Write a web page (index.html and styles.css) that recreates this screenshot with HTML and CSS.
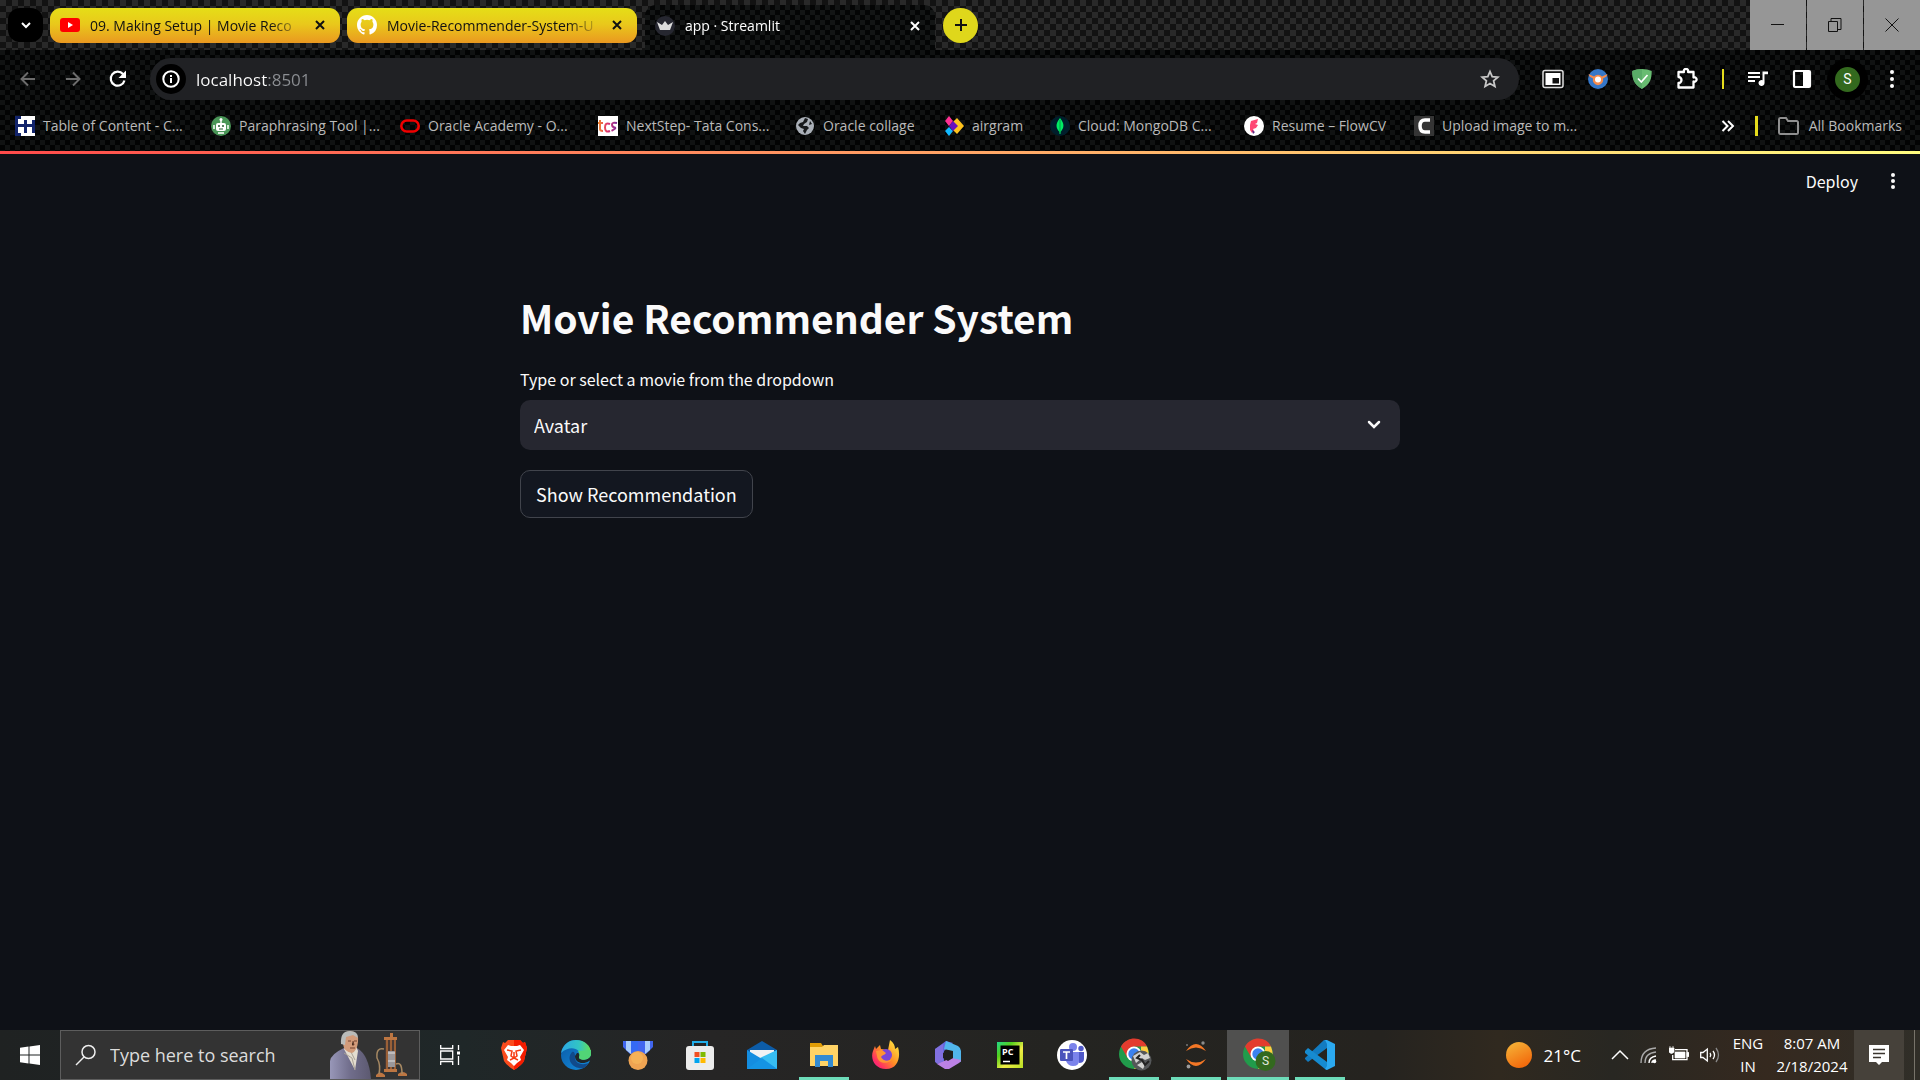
FILE: index.html
```html
<!DOCTYPE html>
<html lang="en">
<head>
<meta charset="utf-8">
<title>app · Streamlit</title>
<link rel="stylesheet" href="styles.css">
</head>
<body>
<header class="browser">
  <div class="tabstrip">
    <button class="tab-search" aria-label="Search tabs"><svg width="14" height="14" viewBox="0 0 14 14"><path d="M3 5l4 4 4-4" fill="none" stroke="#fff" stroke-width="2"/></svg></button>
    <div class="tab">
      <svg width="20" height="20" viewBox="0 0 20 20"><rect y="3" width="20" height="14" rx="3" fill="#f00"/><path d="M8 7l5 3-5 3z" fill="#fff"/></svg>
      <button class="tab-title">09. Making Setup | Movie Reco</button>
      <button class="tab-close" aria-label="Close tab"><svg width="12" height="12" viewBox="0 0 12 12"><path d="M2 2l8 8M10 2l-8 8" stroke="currentColor" stroke-width="2"/></svg></button>
    </div>
    <div class="tab">
      <svg width="20" height="20" viewBox="0 0 16 16"><path fill="#fff" d="M8 0C3.58 0 0 3.58 0 8c0 3.54 2.29 6.53 5.47 7.59.4.07.55-.17.55-.38 0-.19-.01-.82-.01-1.49-2.01.37-2.53-.49-2.69-.94-.09-.23-.48-.94-.82-1.13-.28-.15-.68-.52-.01-.53.63-.01 1.08.58 1.23.82.72 1.21 1.87.87 2.33.66.07-.52.28-.87.51-1.07-1.78-.2-3.64-.89-3.64-3.95 0-.87.31-1.59.82-2.15-.08-.2-.36-1.02.08-2.12 0 0 .67-.21 2.2.82a7.6 7.6 0 014 0c1.53-1.04 2.2-.82 2.2-.82.44 1.1.16 1.92.08 2.12.51.56.82 1.27.82 2.15 0 3.07-1.87 3.75-3.65 3.95.29.25.54.73.54 1.48 0 1.07-.01 1.93-.01 2.2 0 .21.15.46.55.38A8.01 8.01 0 0016 8c0-4.42-3.58-8-8-8z"/></svg>
      <button class="tab-title">Movie-Recommender-System-U</button>
      <button class="tab-close" aria-label="Close tab"><svg width="12" height="12" viewBox="0 0 12 12"><path d="M2 2l8 8M10 2l-8 8" stroke="currentColor" stroke-width="2"/></svg></button>
    </div>
    <div class="tab tab-active">
      <svg width="20" height="20" viewBox="0 0 20 20"><circle cx="10" cy="10" r="10" fill="#262730"/><path d="M2 6l5 3 3-4 3 4 5-3-3 8H5z" fill="#ddd"/></svg>
      <button class="tab-title">app · Streamlit</button>
      <button class="tab-close" aria-label="Close tab"><svg width="12" height="12" viewBox="0 0 12 12"><path d="M2 2l8 8M10 2l-8 8" stroke="currentColor" stroke-width="2"/></svg></button>
    </div>
    <button class="new-tab" aria-label="New tab"><svg width="14" height="14" viewBox="0 0 14 14"><path d="M7 1v12M1 7h12" stroke="#111" stroke-width="2"/></svg></button>
    <div class="window-controls">
      <button aria-label="Minimize"><svg width="14" height="14" viewBox="0 0 14 14"><path d="M0 6.500h13" stroke="#111"/></svg></button>
      <button aria-label="Restore"><svg width="14" height="14" viewBox="0 0 14 14"><path d="M.5 3.500h9v10h-9zM3 3.500v-3h10v11h-3" fill="none" stroke="#111"/></svg></button>
      <button aria-label="Close"><svg width="14" height="14" viewBox="0 0 14 14"><path d="M.5.5l13 13M13.500.5l-13 13" stroke="#111"/></svg></button>
    </div>
  </div>

  <div class="toolbar">
    <div class="nav-buttons">
      <button aria-label="Back"><svg width="20" height="20" viewBox="0 0 20 20"><path d="M17 10H4M10 3.500L3.500 10l6.500 6.500" fill="none" stroke="#6c6c6c" stroke-width="2"/></svg></button>
      <button aria-label="Forward"><svg width="20" height="20" viewBox="0 0 20 20"><path d="M3 10h13M10 3.500l6.500 6.500-6.500 6.500" fill="none" stroke="#6c6c6c" stroke-width="2"/></svg></button>
      <button aria-label="Reload"><svg width="20" height="20" viewBox="0 0 20 20"><path d="M16.500 11.500A7 7 0 1 1 15 5l1.500 1.500" fill="none" stroke="#fff" stroke-width="2.200"/><path d="M18 1.500V9h-7.500z" fill="#fff"/></svg></button>
    </div>
    <div class="omnibox">
      <button class="site-info" aria-label="Site information"><svg width="18" height="18" viewBox="0 0 18 18"><circle cx="9" cy="9" r="7.700" fill="none" stroke="#fff" stroke-width="2"/><path d="M9 8v5M9 5v2" stroke="#fff" stroke-width="2"/></svg></button>
      <input class="address" type="text" value="localhost:8501" aria-label="Address">
      <button aria-label="Bookmark this tab"><svg width="20" height="20" viewBox="0 0 20 20"><path d="M10 2.500l2.200 5.200 5.600.5-4.200 3.700 1.300 5.500L10 14.500l-4.900 2.900 1.300-5.500-4.200-3.700 5.600-.5z" fill="none" stroke="#c8c8c8" stroke-width="1.800"/></svg></button>
    </div>
    <div class="extensions">
      <button aria-label="Picture in picture"><svg width="22" height="20" viewBox="0 0 22 20"><rect x="1" y="1.500" width="20" height="17" rx="2" fill="#111" stroke="#ddd" stroke-width="1.500"/><rect x="3.500" y="4" width="15" height="12" fill="#fff"/><rect x="10.500" y="9" width="6.500" height="5.500" fill="#111"/></svg></button>
      <button aria-label="Extension"><svg width="20" height="20" viewBox="0 0 20 20"><circle cx="10" cy="10" r="10" fill="#3577c8"/><path d="M.5 5L6 7.500a5.500 5.500 0 0 1 8 0L19.500 5l-1 2.500-3.500 2a5.200 5.200 0 1 1-10 0l-3.500-2z" fill="#f58a4b"/><circle cx="10" cy="10.500" r="3" fill="#fff"/></svg></button>
      <button aria-label="Ad blocker"><svg width="20" height="20" viewBox="0 0 20 20"><path d="M10 0c3.500 0 7 .7 9.700 2 0 7-1 13-9.700 18C1.300 15 .3 9 .3 2 3 .7 6.500 0 10 0z" fill="#68bc71"/><path d="M10 0v20C1.300 15 .3 9 .3 2 3 .7 6.500 0 10 0z" fill="#5aac68"/><path d="M6 9.500l3.300 3.500L15.500 6" fill="none" stroke="#fff" stroke-width="1.700"/></svg></button>
      <button aria-label="Extensions"><svg width="22" height="22" viewBox="0 0 22 22"><path d="M2.500 4H8a2.200 2.200 0 1 1 4 0h5.500v5.500a2.200 2.200 0 1 1 0 4V19.500h-15V15a3 3 0 0 0 0-6z" fill="none" stroke="#fff" stroke-width="2.300" stroke-linejoin="round"/></svg></button>
      <span class="bar"></span>
      <button aria-label="Media"><svg width="20" height="20" viewBox="0 0 20 20"><path d="M0 4h12M0 8h12M0 12h7" stroke="#fff" stroke-width="2"/><path d="M20 2.500v2.800h-3.500V14a3 3 0 1 1-2-2.800V2.500z" fill="#fff"/></svg></button>
      <button aria-label="Side panel"><svg width="20" height="20" viewBox="0 0 20 20"><rect x="2" y="2" width="16" height="16" rx="1" fill="none" stroke="#fff" stroke-width="2.200"/><path d="M11 2h7v16h-7z" fill="#fff"/></svg></button>
      <button class="profile" aria-label="Profile"><span>S</span></button>
      <button aria-label="Menu"><svg width="6" height="20" viewBox="0 0 6 20"><g fill="#fff"><circle cx="3" cy="3" r="2"/><circle cx="3" cy="10" r="2"/><circle cx="3" cy="17" r="2"/></g></svg></button>
    </div>
  </div>

  <nav class="bookmarks" aria-label="Bookmarks">
    <div class="bookmark-list">
      <a href="#"><svg width="20" height="20" viewBox="0 0 20 20"><rect width="20" height="20" fill="#fff"/><path d="M0 0h6v3H3v5h6V4h3v4h5V4h3v13h-3v-6h-5v6H9v-6H3v6h3v3H0z" fill="#12246b"/></svg><span>Table of Content - C...</span></a>
      <a href="#"><svg width="20" height="20" viewBox="0 0 20 20"><circle cx="10" cy="10" r="10" fill="#499557"/><rect x="5" y="7" width="10" height="8" rx="2" fill="#fff"/><path d="M10 3v4M3 9v4M17 9v4M7 17h6" stroke="#fff" stroke-width="1.500"/><circle cx="10" cy="3.500" r="1.500" fill="#fff"/><circle cx="8" cy="10" r="1" fill="#245b31"/><circle cx="12" cy="10" r="1" fill="#245b31"/><path d="M8 13h4" stroke="#245b31"/></svg><span>Paraphrasing Tool |...</span></a>
      <a href="#"><svg width="20" height="20" viewBox="0 0 20 20"><rect x="1.300" y="4.500" width="17.400" height="11" rx="5.500" fill="none" stroke="#f00000" stroke-width="2.600"/></svg><span>Oracle Academy - O...</span></a>
      <a href="#"><svg width="20" height="20" viewBox="0 0 20 20"><defs><linearGradient id="tcs"><stop stop-color="#f28b2d"/><stop offset=".5" stop-color="#e0336d"/><stop offset="1" stop-color="#7b2d9c"/></linearGradient></defs><rect width="20" height="20" fill="#fff"/><g fill="none" stroke="url(#tcs)" stroke-width="2"><path d="M2 4v9q0 2 3 2M0 7h5M12 8q-5-2-5 3.500t5 3.500M19 7q-5-1-5 1.500t2.500 3-3 3.300"/></g></svg><span>NextStep- Tata Cons...</span></a>
      <a href="#"><svg width="20" height="20" viewBox="0 0 20 20"><circle cx="10" cy="10" r="9" fill="#aab0b8"/><path d="M10 2l3 1-1 3-3 2-1 2h4l2 2-2 2-2 4-2-3 1-2-3-1-3-3 2-2 3-1z" fill="#171a1c"/><path d="M15 5l2 3-3 1z" fill="#171a1c"/></svg><span>Oracle collage</span></a>
      <a href="#"><svg width="20" height="20" viewBox="0 0 20 20"><path d="M13 2l7 8-7 8-4-4 4-4-4-4z" fill="#ffc21c"/><path d="M5 0l4 5-4 5-4-5z" fill="#ff2f92"/><path d="M5 11l4 4-4 5-4-5z" fill="#12b9ff"/><path d="M9 5l5 5-5 5-4-5z" fill="#6910bd"/></svg><span>airgram</span></a>
      <a href="#"><svg width="20" height="20" viewBox="0 0 20 20"><circle cx="10" cy="10" r="10" fill="#001e2b"/><path d="M10 2c5 6 4 10 .5 14v2h-1v-2C6 12 5 8 10 2z" fill="#00ed64"/><path d="M10 4v13" stroke="#05a049"/></svg><span>Cloud: MongoDB C...</span></a>
      <a href="#"><svg width="20" height="20" viewBox="0 0 20 20"><circle cx="10" cy="10" r="10" fill="#fff"/><path d="M7 5l7-2-1 4-2 1 3 1-2 3-3 1 1 2-2 2-2-3V9z" fill="#ff4773"/><path d="M8 14l3 2-2 2z" fill="#5b2a86"/></svg><span>Resume – FlowCV</span></a>
      <a href="#"><svg width="20" height="20" viewBox="0 0 20 20"><rect width="20" height="20" fill="#353535"/><path d="M16 4h-5q-5 0-5 6t5 6h5" fill="none" stroke="#fff" stroke-width="3.500"/></svg><span>Upload image to m...</span></a>
    </div>
    <div class="bookmark-end">
      <button aria-label="More bookmarks"><svg width="14" height="14" viewBox="0 0 14 14"><path d="M1.500 2l5 5-5 5M7 2l5 5-5 5" fill="none" stroke="#fff" stroke-width="2"/></svg></button>
      <span class="bar bar-bold"></span>
      <a href="#"><svg width="21" height="18" viewBox="0 0 21 18"><path d="M1 2.500Q1 1 2.500 1H8l2 3h8.500Q20 4 20 5.500v10q0 1.500-1.500 1.500h-16Q1 17 1 15.500z" fill="none" stroke="#8f8f8f" stroke-width="2"/></svg><span>All Bookmarks</span></a>
    </div>
  </nav>
</header>

<main class="app">
  <div class="app-header">
    <button>Deploy</button>
    <button aria-label="Main menu"><svg width="6" height="20" viewBox="0 0 6 20"><g fill="#fafafa"><circle cx="3" cy="4" r="2"/><circle cx="3" cy="10" r="2"/><circle cx="3" cy="16" r="2"/></g></svg></button>
  </div>
  <section class="content">
    <h1>Movie Recommender System</h1>
    <label for="movie">Type or select a movie from the dropdown</label>
    <div class="select-box">
      <select id="movie"><option>Avatar</option></select>
      <svg width="14" height="10" viewBox="0 0 14 10"><path d="M2 2l5 5 5-5" fill="none" stroke="#fafafa" stroke-width="2.500" stroke-linecap="round"/></svg>
    </div>
    <button class="recommend">Show Recommendation</button>
  </section>
</main>

<footer class="taskbar">
  <button class="start" aria-label="Start"><svg width="20" height="20" viewBox="0 0 20 20"><path d="M0 2.800l8.500-1.200v8H0zM9.500 1.400L20 0v9.500H9.500zM0 10.500h8.500v8L0 17.300zM9.500 10.500H20V20L9.500 18.600z" fill="#fff"/></svg></button>
  <div class="search">
    <svg width="22" height="22" viewBox="0 0 22 22"><circle cx="13.500" cy="8" r="6.500" fill="none" stroke="#eee" stroke-width="1.500"/><path d="M9 13L1 21" stroke="#eee" stroke-width="1.500"/></svg>
    <input type="text" placeholder="Type here to search" aria-label="Type here to search">
    <svg class="highlight" width="80" height="48" viewBox="0 0 80 48"><defs><linearGradient id="coat"><stop stop-color="#9897b8"/><stop offset=".5" stop-color="#706d8b"/><stop offset="1" stop-color="#5c5970"/></linearGradient></defs><path d="M0 48V30q1-7 14-13h13q12 7 14 31z" fill="url(#coat)"/><path d="M14 18l3-3h9l2 5-3 19z" fill="#e4ddd0"/><path d="M14 22l8 5 3 12M20 19l5 10" stroke="#aaa195" fill="none"/><path d="M12 10q-1-9 8-10 9 1 8 11-1 9-6 11-8-1-9-9z" fill="#d29b7a"/><path d="M11 13q-1-13 9-13 8 0 8 7l-5-3-7 2-1 8z" fill="#b9bbb9"/><path d="M18 10h3M24 10h3M23 10l1 4h-2M20 17h5" stroke="#74432f"/><path d="M55 7h11v32H55z" fill="#4a3a34"/><path d="M57 7v32M61 7v32M65 7v32" stroke="#b56d38" stroke-width="1.500"/><path d="M58 20h7v16h-7z" fill="#9b989b"/><path d="M58 22h7M58 30h7" stroke="#e0dedd"/><path d="M54 6h13v3H54zM54 38h13v3H54zM60 2h3v5h-3zM46 44q4-5 9 0v2h-9zM68 43q5-4 9 0v2h-9z" fill="#bd7642"/><path d="M54 18q-8-2-7 9 4 7 2 16M66 33q6-3 6 10" fill="none" stroke="#a78963" stroke-width="1.500"/></svg>
  </div>
  <button class="task-view" aria-label="Task view"><svg width="20" height="20" viewBox="0 0 20 20"><path d="M.7 0v3.500h12V0M.7 20v-3.500h12V20M.7 6h12v8H.7zM18.500 0v5M18.500 11v9" fill="none" stroke="#fff" stroke-width="1.300"/><rect x="17" y="6.500" width="3" height="3" fill="#fff"/></svg></button>
  <div class="apps">
    <button aria-label="Brave"><svg width="30" height="30" viewBox="0 0 30 30"><path d="M9 0h12l3 3 2-1 2 6-3 13q-2 4-10 9Q7 25 5 21L2 8l2-6 2 1z" fill="#fb4b1d"/><path d="M15 0h6l3 3 2-1 2 6-3 13q-2 4-10 9z" fill="#f41c00"/><path d="M9 5l3 1h6l3-1 4 5-4 7 1 3-4 3-3 3-3-3-4-3 1-3-4-7z" fill="#fff"/><path d="M8 10l5 1-1 5 3 2 3-2-1-5 5-1M11 20l4-2 4 2M15 18v-6" fill="none" stroke="#f63b13" stroke-width="1.500"/></svg></button>
    <button aria-label="Edge"><svg width="30" height="30" viewBox="0 0 30 30"><defs><linearGradient id="edge1"><stop stop-color="#2ba6e6"/><stop offset=".6" stop-color="#32c5c3"/><stop offset="1" stop-color="#66e052"/></linearGradient><linearGradient id="edge2" y1="0" y2="1"><stop stop-color="#0c59a4"/><stop offset="1" stop-color="#128ee0"/></linearGradient></defs><circle cx="15" cy="15" r="15" fill="url(#edge2)"/><path d="M0 13C2 4 8 0 15 0c9 0 15 6 15 13 0 5-4 7-8 7-5 0-5-2-4-3 4-8-9-13-18-4z" fill="url(#edge1)"/><path d="M11 12c-7 8 2 18 12 16l5-5c-8 3-15 0-14-7 0-3-1-5-3-4z" fill="#114a8b"/><path d="M14 16c0 7 8 9 14 5l2-1V15c-2 5-8 6-12 3 2-3 0-5-2-5z" fill="#20272a"/><path d="M18 17c1-3 0-4-1-6l13-1v4c0 7-13 7-12 3z" fill="#51d576"/></svg></button>
    <button aria-label="Rewards"><svg width="30" height="30" viewBox="0 0 30 30"><path d="M0 1h30v6l-7 7H7L0 7z" fill="#4166ef"/><path d="M3 1h5v13L3 10zM22 1h5v9l-5 4z" fill="#aacdfc"/><path d="M8 1h7v13H8z" fill="#356af4"/><circle cx="15" cy="20.500" r="9.500" fill="#efa452"/><circle cx="14" cy="18" r="6" fill="#f9bd5d" opacity=".6"/></svg></button>
    <button aria-label="Microsoft Store"><svg width="30" height="30" viewBox="0 0 30 30"><path d="M8 8V2h14v6" fill="none" stroke="#22aeea" stroke-width="2"/><rect x="1" y="6" width="28" height="24" rx="3" fill="#ececec"/><path d="M9.500 12h5v5h-5z" fill="#f25022"/><path d="M15.500 12h5v5h-5z" fill="#7fba00"/><path d="M9.500 18h5v5h-5z" fill="#00a4ef"/><path d="M15.500 18h5v5h-5z" fill="#ffb900"/></svg></button>
    <button aria-label="Mail"><svg width="30" height="30" viewBox="0 0 30 30"><path d="M0 10L15 1l15 9v10H0z" fill="#0c5ca8"/><path d="M3 10h24v8H3z" fill="#f1f2f4"/><path d="M0 10l15 9 15-9v19H0z" fill="#148de0"/><path d="M30 10v19L13 18z" fill="#37bdf2"/><path d="M0 29l15-11 15 11z" fill="#1594e4"/></svg></button>
    <button class="open" aria-label="File Explorer"><svg width="30" height="30" viewBox="0 0 30 30"><path d="M1 3h11l2 3h13v5H1z" fill="#e09c05"/><path d="M1 7h12l2-2h14v21H1z" fill="#ffd365"/><path d="M6 15h18v12h-5v-6h-8v6H6z" fill="#338bd2"/></svg></button>
    <button aria-label="Firefox"><svg width="30" height="30" viewBox="0 0 30 30"><defs><linearGradient id="ff" x1="1" x2="0" y1="0" y2="1"><stop offset=".1" stop-color="#ffe23e"/><stop offset=".5" stop-color="#ff8b25"/><stop offset=".8" stop-color="#ff2d65"/><stop offset="1" stop-color="#e320a0"/></linearGradient></defs><path d="M4 6l1 3 4-4 1 4 7 1 2-10c4 3 5 6 5 9l3-2c3 10 0 22-12 22C4 29-1 19 2 11z" fill="url(#ff)"/><circle cx="15" cy="15" r="6" fill="#7a45d9"/><path d="M5 11l6-1 4 3c-1 2-4 2-5 4 2 4 7 5 11 2-2 5-14 6-15-3z" fill="#ff9535"/></svg></button>
    <button aria-label="Microsoft 365"><svg width="30" height="30" viewBox="0 0 30 30"><path d="M2 9L13 1l7 2-9 8v11l-6 2-3-2z" fill="#656ade"/><path d="M13 1l12 5q3 2 3 5v11l-8-3V11l-9-2z" fill="#51b6ec"/><path d="M28 20q0 2-2 3l-10 6h-4L4 24l7-3 8-3z" fill="#bc81e5"/><path d="M2 9l8-5v17l-6 3-2-3z" fill="#9474df" opacity=".6"/><path d="M15 10l5 3v5l-5 3-5-3v-5z" fill="#20211f"/></svg></button>
    <button aria-label="PyCharm"><svg width="30" height="30" viewBox="0 0 30 30"><defs><linearGradient id="pc" x2="1" y2="1"><stop stop-color="#21d789"/><stop offset=".3" stop-color="#54d01b"/><stop offset=".6" stop-color="#f1ed45"/><stop offset="1" stop-color="#b7df24"/></linearGradient></defs><path d="M2 2h26v26H2z" fill="url(#pc)"/><path d="M5.500 5.500h19v19h-19z"/><text x="7" y="15" font-family="Open Sans" font-size="9" font-weight="700" fill="#fff">PC</text><path d="M8 21.500h7" stroke="#fff" stroke-width="1.500"/></svg></button>
    <button aria-label="Teams"><svg width="30" height="30" viewBox="0 0 30 30"><circle cx="15" cy="15" r="15" fill="#fff"/><circle cx="16" cy="7" r="4" fill="#7b83eb"/><circle cx="24" cy="8.500" r="2.700" fill="#5059c9"/><path d="M18 12h9v7q0 4-5 4z" fill="#5059c9"/><path d="M9 12h13v9q0 5-6 5-5 0-7-5z" fill="#7b83eb"/><rect x="3" y="9" width="13" height="12" rx="1" fill="#4b53bc"/><path d="M6 12h7M9.500 12v7" stroke="#fff" stroke-width="1.700"/></svg></button>
    <button class="open badged" aria-label="Chrome"><svg width="34" height="34" viewBox="0 0 34 34"><circle cx="15" cy="16" r="15" fill="#219b4b"/><path d="M2 8.500C9-3 24-1 28 8.500H15L8.500 20z" fill="#e33b2e"/><path d="M28 8.500q5 13-5 20L15 31l7-11V8.500z" fill="#ffcd40"/><circle cx="15" cy="16" r="7.500" fill="#fff"/><circle cx="15" cy="16" r="5.700" fill="#3d82ee"/><circle cx="22.500" cy="22.500" r="10" fill="#555759"/><path d="M14 18l7-4 4 3 4-2 2 5-5 2-3-2-6 5zM18 27l5-3 3 3-2 4z" fill="#d2d2d0"/><path d="M21 17l-3 3 5 2 3 5 4-4" stroke="#222" fill="none" stroke-width="2"/></svg></button>
    <button class="open" aria-label="Jupyter"><svg width="30" height="30" viewBox="0 0 30 30"><path d="M5 11q10-14 20 0-10-7-20 0zM5 19q10 14 20 0-10 7-20 0z" fill="#f37726"/><circle cx="22" cy="3" r="1.700" fill="#8b8c8b"/><circle cx="6" cy="5" r="1" fill="#777"/><circle cx="7.500" cy="26.500" r="1.900" fill="#9c9c9c"/></svg></button>
    <button class="open badged current" aria-label="Chrome, S profile"><svg width="34" height="34" viewBox="0 0 34 34"><circle cx="15" cy="16" r="15" fill="#219b4b"/><path d="M2 8.500C9-3 24-1 28 8.500H15L8.500 20z" fill="#e33b2e"/><path d="M28 8.500q5 13-5 20L15 31l7-11V8.500z" fill="#ffcd40"/><circle cx="15" cy="16" r="7.500" fill="#fff"/><circle cx="15" cy="16" r="5.700" fill="#3d82ee"/><circle cx="22.500" cy="23" r="10" fill="#33691e"/><text x="22.500" y="27" text-anchor="middle" font-family="Roboto" font-size="12" fill="#e0e8dc">S</text></svg></button>
    <button class="open" aria-label="Visual Studio Code"><svg width="30" height="30" viewBox="0 0 30 30"><path d="M22 0v8L3 22 0 19v-1L19 0z" fill="#127bc0"/><path d="M0 11l3-3 19 14v8l-2-1L0 13z" fill="#168bd0"/><path d="M20 0h2l8 4v22l-8 4-2-1 2-3V4z" fill="#2ba9f0"/></svg></button>
  </div>
  <div class="tray">
    <button class="weather"><svg width="26" height="26" viewBox="0 0 26 26"><defs><linearGradient id="sun" x2=".5" y2="1"><stop stop-color="#f6b93b"/><stop offset="1" stop-color="#f26b0d"/></linearGradient></defs><circle cx="13" cy="13" r="13" fill="url(#sun)"/></svg><span>21°C</span></button>
    <div class="status">
      <button aria-label="Show hidden icons"><svg width="18" height="18" viewBox="0 0 18 18"><path d="M1 13l8-8 8 8" fill="none" stroke="#fff" stroke-width="1.500"/></svg></button>
      <button aria-label="Network"><svg width="18" height="18" viewBox="0 0 18 18"><g fill="none" stroke="#aaa" stroke-width="1.400"><path d="M1 17Q1 3 16 2M5 17Q5 7 16 6"/><path d="M9 17q0-6 7-7M12 17q0-3 4-3" stroke="#fff"/></g><circle cx="14.500" cy="15.500" r="1.800" fill="#fff"/></svg></button>
      <button aria-label="Battery"><svg width="20" height="18" viewBox="0 0 20 18"><path d="M6 3.700h12v10H3.700V9" fill="none" stroke="#fff" stroke-width="1.300"/><path d="M6 6h10v6H6zM18 6.500h2v4h-2zM0 2h5v4q-2.500 3-5 0zM1 0v3M4 0v3" fill="#fff" stroke="#fff" stroke-width=".7"/></svg></button>
      <button aria-label="Volume"><svg width="20" height="18" viewBox="0 0 20 18"><path d="M.7 6.500H3L7.300 3v12L3 11.500H.7z" fill="none" stroke="#fff" stroke-width="1.300"/><path d="M10 7q1.500 2 0 4M13 5q3 4 0 8" fill="none" stroke="#fff" stroke-width="1.300"/><path d="M16 2q5 7 0 14" fill="none" stroke="#888" stroke-width="1.300"/></svg></button>
    </div>
    <button class="language">ENG<br>IN</button>
    <button class="clock">8:07 AM<br>2/18/2024</button>
    <button class="notifications" aria-label="Notifications"><svg width="20" height="20" viewBox="0 0 20 20"><path d="M0 0h20v17h-7l-3 3-3-3H0z" fill="#fff"/><path d="M4 4.500h12M4 8.500h12M4 12.500h8" stroke="#3b362f" stroke-width="1.300"/></svg></button>
    <span class="desktop-edge"></span>
  </div>
</footer>
</body>
</html>
```
FILE: styles.css
```css
* { box-sizing: border-box; }
body {
  margin: 0;
  min-height: 100vh;
  display: flex;
  flex-direction: column;
  background: #0e1117;
  color: #fafafa;
  font-family: "Open Sans", "Liberation Sans", sans-serif;
}
button {
  display: flex;
  align-items: center;
  justify-content: center;
  padding: 0;
  border: 0;
  background: none;
  color: inherit;
  font: inherit;
}
a { color: inherit; text-decoration: none; }
svg { display: block; flex: none; }
input, select { min-width: 0; border: 0; padding: 0; background: none; color: inherit; font: inherit; outline: 0; }

/* Browser window */
.browser { background: repeating-conic-gradient(#020303 0 25%, #101212 0 50%) 0 0 / 10px 10px; }
.tabstrip {
  display: flex;
  align-items: center;
  height: 50px;
  padding-left: 8px;
  font-size: 14px;
  background: repeating-conic-gradient(#121212 0 25%, #292929 0 50%) 0 0 / 12px 12px;
}
.tab-search { width: 35px; height: 34px; margin-right: 7px; border-radius: 12px; background: #000; }
.tab {
  display: flex;
  align-items: center;
  gap: 10px;
  width: 290px;
  height: 35px;
  margin-right: 7px;
  padding: 0 14px 0 10px;
  border-radius: 11px;
  background: linear-gradient(#e5de17, #e9c91b 45%, #ea9820);
  color: #111;
}
.tab-title {
  flex: 1;
  justify-content: flex-start;
  white-space: nowrap;
  -webkit-mask-image: linear-gradient(90deg, #000 84%, transparent 100%);
  mask-image: linear-gradient(90deg, #000 84%, transparent 100%);
}
.tab-close { width: 12px; }
.tab-active {
  align-self: flex-end;
  height: 45px;
  margin: 0 8px 0 1px;
  padding-bottom: 4px;
  border-radius: 11px 11px 0 0;
  background: repeating-conic-gradient(#040505 0 25%, #131515 0 50%) 0 0 / 10px 10px;
  color: #fff;
}
.new-tab { width: 35px; height: 35px; border-radius: 50%; background: #dfd71b; }
.window-controls { display: flex; align-self: stretch; margin-left: auto; gap: 1px; }
.window-controls button { width: 56px; background: #969696; }

.toolbar { display: flex; align-items: center; padding: 8px 25px 8px 18px; }
.nav-buttons { display: flex; gap: 25px; width: 132px; }
.omnibox {
  flex: 1;
  display: flex;
  align-items: center;
  gap: 10px;
  height: 42px;
  padding: 0 19px 0 6px;
  border-radius: 21px;
  background: #202124;
}
.site-info { width: 30px; height: 30px; border-radius: 50%; background: #000; }
.address {
  flex: 1;
  font-size: 17px;
  color: transparent;
  background: linear-gradient(90deg, #fff 72px, #8c8f93 72px);
  -webkit-background-clip: text;
  background-clip: text;
}
.extensions { display: flex; align-items: center; gap: 24px; padding-left: 23px; }
.bar { width: 2px; height: 20px; background: #e5dc1c; }
.bar-bold { width: 3px; }
.profile { width: 41px; height: 41px; margin: 0 -3px 0 -9px; border-radius: 50%; background: #000; font: 14px Roboto, sans-serif; }
.profile span { width: 25px; line-height: 25px; border-radius: 50%; background: #33691e; }

.bookmarks { display: flex; align-items: center; justify-content: space-between; height: 43px; padding: 0 18px 8px 15px; font-size: 14px; color: #b9b9b9; }
.bookmark-list { display: grid; grid-template-columns: 196px 189px 198px 197px 149px 106px 194px 170px 170px; }
.bookmarks a { display: flex; align-items: center; gap: 8px; white-space: nowrap; }
.bookmarks .bookmark-end a { gap: 10px; }
.bookmark-end { display: flex; align-items: center; gap: 20px; }

/* Streamlit app */
.app { flex: 1; border-top: 3px solid; border-image: linear-gradient(90deg, #ff4b4b, #fffd80) 1; font-family: "Noto Sans CJK SC", sans-serif; }
.app-header { display: flex; align-items: center; justify-content: flex-end; gap: 32px; height: 54px; padding-right: 24px; font-size: 16px; }
.content { max-width: 880px; margin: 0 auto; padding-top: 76px; }
h1 { margin: 0 0 15px; font-size: 39px; font-weight: 600; line-height: 66px; }
label { display: block; margin-bottom: 7px; font-size: 16px; line-height: 28px; }
.select-box { display: grid; align-items: center; height: 50px; border-radius: 10px; background: #262730; font-size: 18px; }
.select-box > * { grid-area: 1 / 1; }
.select-box select { appearance: none; height: 50px; padding: 0 14px; }
.select-box svg { justify-self: end; margin-right: 19px; pointer-events: none; }
.recommend { height: 48px; margin-top: 20px; padding: 0 15px; border: 1px solid #41444c; border-radius: 10px; background: #131720; font-size: 18px; }

/* Taskbar */
.taskbar { display: flex; height: 50px; background: linear-gradient(90deg, #1f2222, #1f2728 24%, #262525 37%, #242421 55%, #25231f 72%, #30291f 78%, #282722 84%, #35291f 92%, #302e28); }
.start { width: 60px; }
.search { display: flex; align-items: center; width: 360px; padding: 0 9px 0 14px; border: 1px solid #5d5d5d; background: #333; font-size: 18px; }
.search input { flex: 1; margin-left: 13px; }
.search input::placeholder { color: #dcdcdc; opacity: 1; }
.highlight { align-self: flex-end; }
.task-view { width: 60px; }
.apps { display: flex; margin-left: 3px; }
.apps button { width: 62px; border-bottom: 3px solid transparent; padding-top: 3px; }
.apps .open { border-image: linear-gradient(90deg, transparent 6px, #6ddcb9 6px, #6ddcb9 56px, transparent 56px) 0 0 3 0; }
.apps .badged { padding-left: 4px; }
.apps .current { background: #50504f; border-image: none; border-bottom-color: #6ddcb9; }
.tray { display: flex; margin-left: auto; align-items: stretch; color: #fff; font-size: 15px; line-height: 23px; }
.weather { gap: 12px; font-size: 17px; margin-right: 30px; }
.status { display: flex; gap: 11px; margin-right: 11px; }
.language, .clock { display: block; text-align: center; white-space: nowrap; }
.language { width: 34px; margin-right: 5px; }
.clock { width: 84px; }
.notifications { width: 50px; background: #46413a; }
.desktop-edge { width: 6px; margin-left: 10px; border-left: 1px solid #77736a; }
```
